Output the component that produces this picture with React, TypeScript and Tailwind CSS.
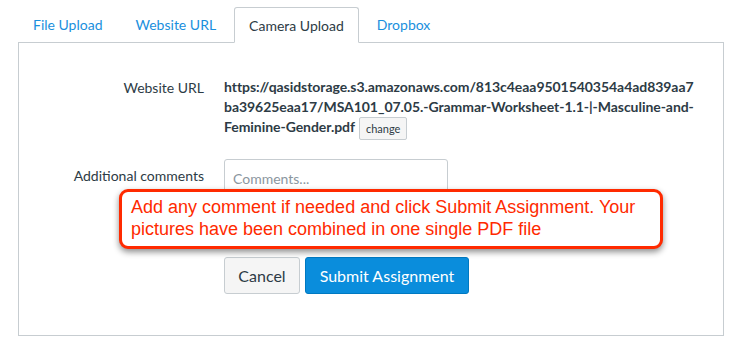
import { useState } from "react";

const tabs = ["File Upload", "Website URL", "Camera Upload", "Dropbox"];

function Tabs({ active }: { active: string }) {
  return (
    <ul className="ml-[18px] flex items-end pt-[7px]">
      {tabs.map((t) => (
        <li key={t} className="mr-[3px]">
          {t === active ? (
            <div className="relative z-10 -mb-px flex h-[36px] items-center rounded-t-[3px] border border-b-white border-[#c7cdd1] bg-white px-[14px] text-[#2d3b45]">
              {t}
            </div>
          ) : (
            <div className="flex h-[35px] items-center px-[15px] text-[#1a8fdd]">
              {t}
            </div>
          )}
        </li>
      ))}
    </ul>
  );
}

export default function App() {
  const [comment, setComment] = useState("");

  return (
    <div className="h-[358px] w-[731px] bg-white font-['Lato',sans-serif] text-[14px] text-[#2d3b45]">
      <Tabs active="Camera Upload" />
      <div className="relative ml-[18px] mr-[7px] h-[294px] border border-[#c7cdd1] pt-[34px]">
        {/* file row */}
        <div className="flex">
          <div className="w-[185px] pt-[1px] text-right leading-[20px]">Website URL</div>
          <div className="ml-[20px] whitespace-nowrap font-bold leading-[20px] tracking-[-0.05px]">
            https://qasidstorage.s3.amazonaws.com/813c4eaa9501540354a4ad839aa7
            <br />
            ba39625eaa17/MSA101_07.05.-Grammar-Worksheet-1.1-|-Masculine-and-
            <br />
            Feminine-Gender.pdf
            <button className="ml-[4px] inline-block h-[23px] rounded-[2px] border border-[#c7cdd1] bg-[#f5f5f5] px-[6px] align-middle text-[11px] font-normal leading-none tracking-normal text-[#2d3b45]">
              change
            </button>
          </div>
        </div>

        {/* comments row */}
        <div className="mt-[19px] flex">
          <div className="w-[185px] pt-[6px] text-right">Additional comments</div>
          <textarea
            value={comment}
            onChange={(e) => setComment(e.target.value)}
            placeholder="Comments..."
            className="ml-[20px] h-[70px] w-[224px] resize-none rounded-[3px] border border-[#c7cdd1] px-[8px] py-[8px] text-[14px] placeholder:text-[#8b969e]"
          />
        </div>

        <div className="mt-[28px] flex gap-[5px] pl-[205px] text-[16px]">
          <button className="h-[37px] w-[76px] rounded-[3px] border border-[#c7cdd1] bg-[#f5f5f5] text-[#2d3b45]">
            Cancel
          </button>
          <button className="h-[37px] w-[164px] rounded-[3px] border border-[#0079c1] bg-[#0a8ddc] text-white">
            Submit Assignment
          </button>
        </div>

        {/* annotation callout */}
        <div className="absolute left-[100px] top-[146px] h-[60px] w-[544px] rounded-[9px] border-[3px] border-[#ff2a00] bg-white px-[9px] pt-[4px] font-['Liberation_Sans',Arial,sans-serif] text-[18px] leading-[22px] text-[#ff2a00] shadow-[0_3px_6px_rgba(0,0,0,0.45)]">
          Add any comment if needed and click Submit Assignment. Your
          <br />
          pictures have been combined in one single PDF file
        </div>
      </div>
    </div>
  );
}
